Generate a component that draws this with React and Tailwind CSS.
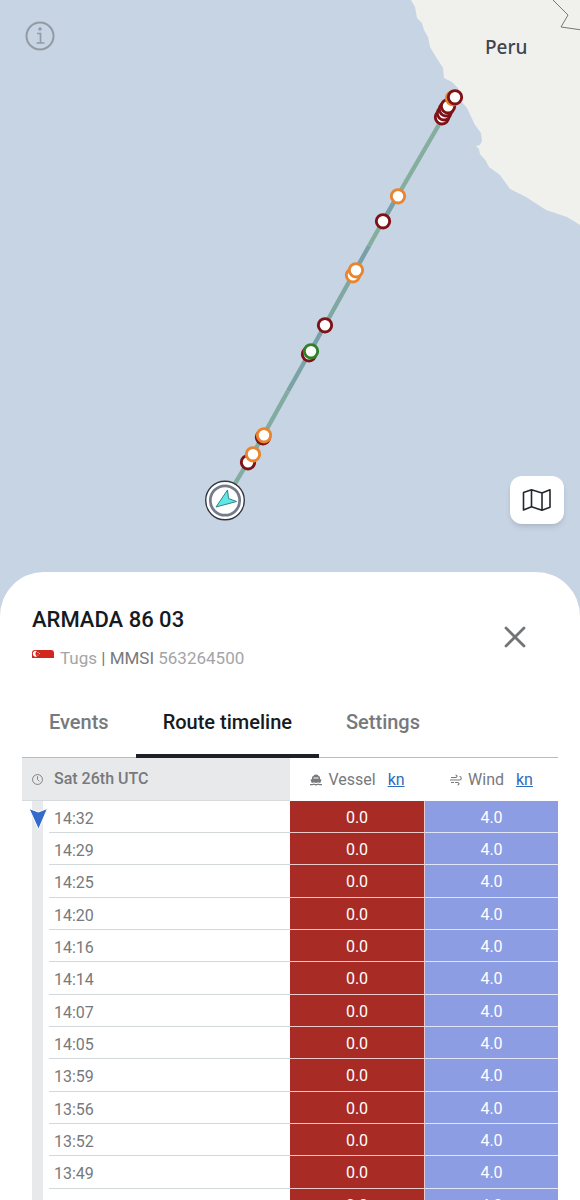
import React from "react";

const COAST =
  "M411 0 L415 7 L417 18 L422 23 L424 30 L428 37 L430 47 L436 57 L443 68 L444 78 L452 82 L458 88 L462 102 L467 108 L475 125 L481 133 L482 141 L480 145 L476 146 L479 149 L480 154 L486 161 L489 167 L500 175 L510 189 L526 197 L546 210 L567 217 L580 225 L900 300 V0 Z";

const track = [
  { d: "M455 97 L383 221", color: "#86ae9f" },
  { d: "M397 197 L383 221", color: "#799fa8" },
  { d: "M383 221 L369 246", color: "#86ae9f" },
  { d: "M369 246 L355 271", color: "#799fa8" },
  { d: "M355 271 L325 325", color: "#80a8a3" },
  { d: "M325 325 L310 352", color: "#799fa8" },
  { d: "M310 352 L288 391", color: "#7ba3a6" },
  { d: "M288 391 L263 436", color: "#82aba1" },
  { d: "M263 436 L248 462 L225 500", color: "#84ada2" },
];

const RED = "#7f1216";
const ORANGE = "#e8852e";
const GREEN = "#32812a";

const stops = [
  { x: 442, y: 117, color: RED },
  { x: 444, y: 113, color: RED },
  { x: 446, y: 109, color: RED },
  { x: 448, y: 106, color: RED },
  { x: 453, y: 98, color: ORANGE },
  { x: 455, y: 97, color: RED },
  { x: 398, y: 196, color: ORANGE },
  { x: 383, y: 221, color: RED },
  { x: 353, y: 275, color: ORANGE },
  { x: 356, y: 270, color: ORANGE },
  { x: 325, y: 325, color: RED },
  { x: 309, y: 354, color: RED },
  { x: 311, y: 351, color: GREEN },
  { x: 263, y: 437, color: RED },
  { x: 264, y: 435, color: ORANGE },
  { x: 248, y: 462, color: RED },
  { x: 253, y: 454, color: ORANGE },
];

const tabs = ["Events", "Route timeline", "Settings"];

const rows = [
  "14:32",
  "14:29",
  "14:25",
  "14:20",
  "14:16",
  "14:14",
  "14:07",
  "14:05",
  "13:59",
  "13:56",
  "13:52",
  "13:49",
  "13:45",
].map((time) => ({ time, vessel: "0.0", wind: "4.0" }));

const BoatIcon = () => (
  <svg className="mr-[6px] h-3 w-3" viewBox="0 0 24 24" fill="#77797c">
    <path d="M7 4 Q7 1 12 1 Q17 1 17 4 Q20 4 20 7 V10 L23 11.500 L20.500 18 Q18 18 16 16.500 Q12 19.500 8 16.500 Q6 18 3.500 18 L1 11.500 L4 10 V7 Q4 4 7 4 Z M7 7 V9 H17 V7 Z" fillRule="evenodd" />
    <path d="M0 20 Q4 20.500 8 18.800 Q12 21.500 16 18.800 Q20 20.500 24 20 V22.500 Q20 23 16 21.500 Q12 24 8 21.500 Q4 23 0 22.500 Z" />
  </svg>
);

const WindIcon = () => (
  <svg
    className="mr-[6px] h-3 w-3"
    viewBox="0 0 24 24"
    fill="none"
    stroke="#77797c"
    strokeWidth="2.200"
  >
    <path d="M2 7 H11 Q14 7 14 4.500 Q14 2 11 2" />
    <path d="M0 12 H19 Q22.500 12 22.500 8.500 Q22.500 5 19 5" />
    <path d="M2 17 H8 M10 17 H15 Q18 17 18 19.500 Q18 22 15 22" />
  </svg>
);

const RouteMap = () => {
  return (
    <section className="relative min-h-0 overflow-hidden" aria-label="Map">
      <svg
        className="block h-full w-full"
        viewBox="0 0 580 572"
        preserveAspectRatio="xMinYMin slice"
      >
        <path d={COAST} fill="#f0f1ec" />
        <path d="M553 0 L568 15 L561 27 L582 30" fill="none" stroke="#75777a" />
        <g fill="none" strokeWidth="4.400">
          {track.map((part) => (
            <path key={part.d} d={part.d} stroke={part.color} />
          ))}
        </g>
        {stops.map((stop, idx) => (
          <circle
            key={idx}
            cx={stop.x}
            cy={stop.y + 0.3}
            r="6.700"
            fill="#fff"
            stroke={stop.color}
            strokeWidth="2.900"
          />
        ))}

        {/* Current position of the vessel */}
        <circle cx="225" cy="500.5" r="19.3" fill="#fff" stroke="#33373f" strokeWidth="1.4" />
        <circle cx="225" cy="500.5" r="14.7" fill="#fff" stroke="#747b8b" strokeWidth="2.8" />
        <path
          d="M227.500 490 L216 507 L236.500 501.500 L228.500 498.500 Z"
          fill="#61e8e6"
          stroke="#2c8588"
          strokeWidth="1"
          strokeLinejoin="round"
        />
      </svg>

      <span className="absolute left-[485px] top-[35px] font-['Noto_Sans',sans-serif] text-[19px] leading-6 font-medium text-[#3f4450]">
        Peru
      </span>

      <button type="button" aria-label="Information" className="absolute left-6 top-5">
        <svg
          className="h-8 w-8"
          viewBox="0 0 32 32"
          fill="none"
          stroke="#929ba3"
          strokeWidth="2"
        >
          <circle cx="16" cy="16" r="13.500" />
          <circle cx="16" cy="9" r="1.800" fill="#929ba3" stroke="none" />
          <path d="M13 13.500 H16.500 V23 M12.500 23 H20.500" strokeWidth="1.700" />
        </svg>
      </button>

      <button
        type="button"
        aria-label="Map layers"
        className="absolute bottom-12 right-4 flex h-12 w-[54px] items-center justify-center rounded-xl bg-white shadow-md"
      >
        <svg
          className="h-6 w-[30px]"
          viewBox="0 0 30 24"
          fill="none"
          stroke="#23272d"
          strokeWidth="1.600"
          strokeLinejoin="round"
        >
          <path d="M1.500 4.500 L9.500 1.800 L20 5 L28 1.800 V19.200 L20 22.200 L9.500 18.800 L1.500 22 Z M9.500 1.800 V18.800 M20 5 V22.200" />
        </svg>
      </button>
    </section>
  );
};

const SheetHeader = () => {
  return (
    <header className="flex items-center justify-between pl-8 pr-[53px] pt-8">
      <div>
        <h1 className="text-[22px] leading-8 font-medium text-[#151b21]">ARMADA 86 03</h1>
        <p className="mt-2 flex items-center gap-[6px] text-[17px] leading-7 text-[#a3a5a7]">
          <svg className="mb-2 h-2 w-[22px]" viewBox="0 0 22 8">
            <path d="M0 8 V3 Q0 0 3 0 H19 Q22 0 22 3 V8 Z" fill="#d3261f" />
            <path d="M5 1 A3 3 0 1 0 5 6.500 A3.200 3.200 0 0 1 5 1 Z" fill="#fff" />
            <g fill="#f5c9c7">
              <circle cx="6" cy="2.500" r="0.600" />
              <circle cx="7.500" cy="3.500" r="0.600" />
              <circle cx="6" cy="5" r="0.600" />
            </g>
          </svg>
          <span>
            Tugs <span className="text-[#77797c]">| MMSI</span> 563264500
          </span>
        </p>
      </div>
      <button type="button" aria-label="Close">
        <svg
          className="mb-[3px] h-6 w-6"
          viewBox="0 0 24 24"
          stroke="#717577"
          strokeWidth="2.800"
          strokeLinecap="round"
        >
          <path d="M3 3 L21 21 M21 3 L3 21" />
        </svg>
      </button>
    </header>
  );
};

const Timeline = () => {
  return (
    <table className="w-full table-fixed border-separate border-spacing-0 text-base leading-5">
      <colgroup>
        <col className="w-[27px]" />
        <col />
        <col className="w-[135px]" />
        <col className="w-[133px]" />
      </colgroup>
      <thead>
        <tr className="h-[43px] text-[#77797c]">
          <th
            colSpan={2}
            scope="col"
            className="border-b border-[#d6dadc] bg-[#e8e9eb] p-0 pl-[10px] text-left font-medium"
          >
            <span className="flex items-center gap-[11px]">
              <svg
                className="h-[11px] w-[11px]"
                viewBox="0 0 12 12"
                fill="none"
                stroke="#77797c"
              >
                <circle cx="6" cy="6" r="5.400" />
                <path d="M6 2.500 V6 L8 8" />
              </svg>
              Sat 26th UTC
            </span>
          </th>
          <th scope="col" className="p-0 font-normal">
            <span className="flex items-center justify-center">
              <BoatIcon />
              Vessel
              <a href="#vessel-unit" className="ml-3 text-[#2f6cc0] underline">
                kn
              </a>
            </span>
          </th>
          <th scope="col" className="p-0 font-normal">
            <span className="flex items-center justify-center">
              <WindIcon />
              Wind
              <a href="#wind-unit" className="ml-3 text-[#2f6cc0] underline">
                kn
              </a>
            </span>
          </th>
        </tr>
      </thead>
      <tbody>
        {rows.map((row, idx) => (
          <tr key={row.time} className="h-8 text-center text-white nth-[3n]:h-[33px]">
            <td className="relative bg-[linear-gradient(#e8e9eb,#e8e9eb)] bg-[length:11px_100%] bg-[position:10px_0] bg-no-repeat p-0">
              {/* Marker for the selected position */}
              {idx === 0 && (
                <svg className="absolute left-[6px] top-[6px] h-6 w-5" viewBox="0 0 20 24">
                  <path
                    d="M1 1.500 L10.300 5 L19.500 1.500 L10.500 22.500 Z"
                    fill="#346bcb"
                    stroke="#fff"
                    strokeWidth="1"
                  />
                </svg>
              )}
            </td>
            <td className="border-b border-[#d3d9db] p-0 pl-[5px] pt-1 text-left text-[#77797c]">
              {row.time}
            </td>
            <td className="border-r border-b border-[#e9c9c9] bg-[#a92b26] p-0 pt-[2px]">
              {row.vessel}
            </td>
            <td className="border-b border-[#e0e4f8] bg-[#8d9de3] p-0 pt-[2px]">{row.wind}</td>
          </tr>
        ))}
      </tbody>
    </table>
  );
};

const App = () => {
  return (
    <main className="grid h-screen grid-rows-[143fr_157fr] overflow-hidden bg-[#c7d4e4] font-[Roboto,sans-serif]">
      <RouteMap />
      <section className="min-h-0 overflow-hidden rounded-t-[44px] bg-white">
        <SheetHeader />
        <div className="px-[22px] pt-[18px]">
          <nav className="flex border-b border-[#b9bbc1]" role="tablist">
            {tabs.map((tab) => {
              const active = tab === "Route timeline";

              return (
                <button
                  key={tab}
                  type="button"
                  role="tab"
                  aria-selected={active}
                  className={`-mb-px h-[68px] border-b-4 px-[27px] text-xl leading-6 font-medium ${
                    active
                      ? "border-[#1c2127] text-[#151b21]"
                      : "border-transparent text-[#77797c]"
                  }`}
                >
                  {tab}
                </button>
              );
            })}
          </nav>
          <Timeline />
        </div>
      </section>
    </main>
  );
};

export default App;
